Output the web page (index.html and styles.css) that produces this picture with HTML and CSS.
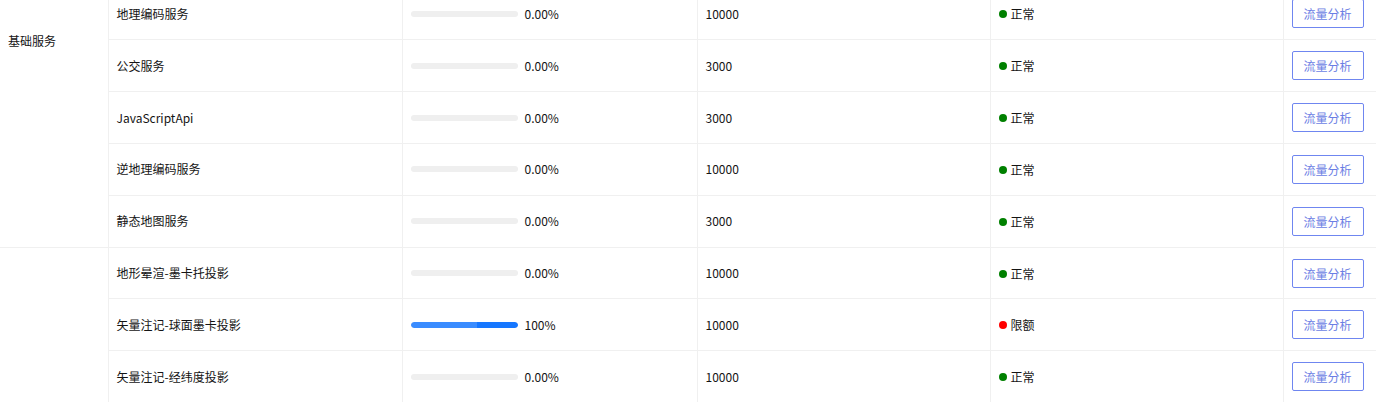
FILE: index.html
```html
<!DOCTYPE html>
<html lang="zh-CN">
<head>
<meta charset="utf-8">
<title>服务配额</title>
<link rel="stylesheet" href="styles.css">
</head>
<body>
<div class="viewport">
  <table class="quota">
    <colgroup>
      <col class="c-group"><col class="c-name"><col class="c-usage"><col class="c-limit"><col class="c-status"><col class="c-action">
    </colgroup>
    <tbody>
      <tr>
        <td class="group" rowspan="5"><span class="group-label">基础服务</span></td>
        <td>地理编码服务</td>
        <td><div class="usage"><div class="track"><div class="fill" style="width:0%"></div></div><span>0.00%</span></div></td>
        <td>10000</td>
        <td><span class="status"><i class="dot ok"></i>正常</span></td>
        <td><button class="btn">流量分析</button></td>
      </tr>
      <tr>
        <td>公交服务</td>
        <td><div class="usage"><div class="track"><div class="fill" style="width:0%"></div></div><span>0.00%</span></div></td>
        <td>3000</td>
        <td><span class="status"><i class="dot ok"></i>正常</span></td>
        <td><button class="btn">流量分析</button></td>
      </tr>
      <tr>
        <td>JavaScriptApi</td>
        <td><div class="usage"><div class="track"><div class="fill" style="width:0%"></div></div><span>0.00%</span></div></td>
        <td>3000</td>
        <td><span class="status"><i class="dot ok"></i>正常</span></td>
        <td><button class="btn">流量分析</button></td>
      </tr>
      <tr>
        <td>逆地理编码服务</td>
        <td><div class="usage"><div class="track"><div class="fill" style="width:0%"></div></div><span>0.00%</span></div></td>
        <td>10000</td>
        <td><span class="status"><i class="dot ok"></i>正常</span></td>
        <td><button class="btn">流量分析</button></td>
      </tr>
      <tr>
        <td>静态地图服务</td>
        <td><div class="usage"><div class="track"><div class="fill" style="width:0%"></div></div><span>0.00%</span></div></td>
        <td>3000</td>
        <td><span class="status"><i class="dot ok"></i>正常</span></td>
        <td><button class="btn">流量分析</button></td>
      </tr>
      <tr>
        <td class="group" rowspan="3"></td>
        <td>地形晕渲-墨卡托投影</td>
        <td><div class="usage"><div class="track"><div class="fill" style="width:0%"></div></div><span>0.00%</span></div></td>
        <td>10000</td>
        <td><span class="status"><i class="dot ok"></i>正常</span></td>
        <td><button class="btn">流量分析</button></td>
      </tr>
      <tr>
        <td>矢量注记-球面墨卡投影</td>
        <td><div class="usage"><div class="track"><div class="fill full" style="width:100%"></div></div><span>100%</span></div></td>
        <td>10000</td>
        <td><span class="status"><i class="dot limit"></i>限额</span></td>
        <td><button class="btn">流量分析</button></td>
      </tr>
      <tr>
        <td>矢量注记-经纬度投影</td>
        <td><div class="usage"><div class="track"><div class="fill" style="width:0%"></div></div><span>0.00%</span></div></td>
        <td>10000</td>
        <td><span class="status"><i class="dot ok"></i>正常</span></td>
        <td><button class="btn">流量分析</button></td>
      </tr>
    </tbody>
  </table>
</div>
</body>
</html>
```

FILE: styles.css
```css
* { box-sizing: border-box; }
html, body {
  margin: 0;
  padding: 0;
  background: #fff;
  overflow: hidden;
}
body {
  font-family: "Noto Sans CJK SC", "Noto Sans", sans-serif;
  font-size: 12px;
  color: #141414;
}
.viewport {
  height: 402px;
  overflow: hidden;
}
.quota {
  width: 1376px;
  table-layout: fixed;
  border-collapse: collapse;
  margin-top: -12px;
}
.c-group { width: 108px; }
.c-name { width: 294px; }
.c-usage { width: 295px; }
.c-limit { width: 293px; }
.c-status { width: 293px; }
.c-action { width: 93px; }
.quota tr { height: 51.83px; }
.quota td {
  padding: 0 7px 0 8px;
  border-right: 1px solid #f0f0f0;
  border-bottom: 1px solid #f0f0f0;
  vertical-align: middle;
  line-height: 18px;
  white-space: nowrap;
}
.quota td:last-child { border-right: none; }
.quota td.group {
  vertical-align: top;
  padding-top: 44px;
}
.usage {
  display: flex;
  align-items: center;
}
.track {
  width: 107px;
  height: 6px;
  border-radius: 3px;
  background: #efefef;
  margin-right: 7px;
  overflow: hidden;
}
.fill {
  height: 100%;
  border-radius: 3px;
  background: #1677ff;
}
.fill.full {
  background: linear-gradient(to right, #3a8cff 0%, #3a8cff 62%, #1677ff 62%, #1677ff 100%);
}
.status {
  display: inline-flex;
  align-items: center;
}
.dot {
  display: inline-block;
  width: 8px;
  height: 8px;
  border-radius: 50%;
  margin-right: 4px;
}
.dot.ok { background: #008000; }
.dot.limit { background: #ff0000; }
.btn {
  display: block;
  width: 72px;
  height: 29px;
  padding: 0;
  border: 1px solid #6f86f0;
  border-radius: 2px;
  background: #fff;
  color: #6b7ee4;
  font-family: inherit;
  font-size: 12px;
  cursor: pointer;
}
```
